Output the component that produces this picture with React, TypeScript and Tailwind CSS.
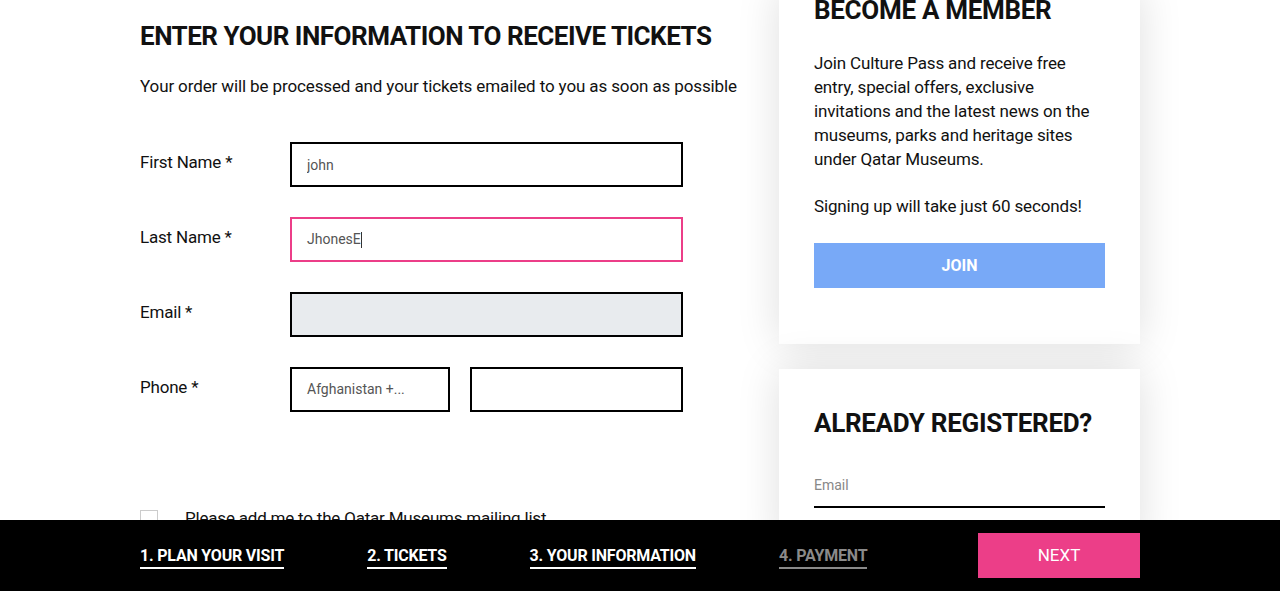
import React from 'react';

const font = { fontFamily: 'Roboto, "Noto Sans", sans-serif' };

interface FieldRowProps {
  label: string;
  children: React.ReactNode;
}

function FieldRow({ label, children }: FieldRowProps) {
  return (
    <div className="flex items-start h-[75px]">
      <label className="w-[150px] pt-[8px] text-[17px] tracking-[-0.2px] text-[#111]">{label}</label>
      <div className="flex gap-[20px] w-[393px]">{children}</div>
    </div>
  );
}

const steps = [
  { label: '1. PLAN YOUR VISIT', active: true },
  { label: '2. TICKETS', active: true },
  { label: '3. YOUR INFORMATION', active: true },
  { label: '4. PAYMENT', active: false },
];

export default function App() {
  return (
    <div className="relative h-[591px] overflow-hidden bg-white" style={font}>
      <div className="w-[1000px] mx-auto flex justify-between">
        {/* form column */}
        <div className="w-[620px] pt-[18px]">
          <h1 className="text-[26px] leading-[36px] font-bold text-[#111] tracking-[-0.5px]">
            ENTER YOUR INFORMATION TO RECEIVE TICKETS
          </h1>
          <p className="mt-[20px] text-[17px] leading-[24px] tracking-[-0.12px] text-[#111] whitespace-nowrap">
            Your order will be processed and your tickets emailed to you as soon as possible
          </p>

          <div className="mt-[44px]">
            <FieldRow label="First Name *">
              <input
                defaultValue="john"
                className="w-full h-[45px] border-2 border-black px-[15px] text-[14px] text-[#555] outline-none"
              />
            </FieldRow>
            <FieldRow label="Last Name *">
              <div className="w-full h-[45px] border-2 border-[#ec3e88] px-[15px] flex items-center text-[14px] text-[#555]">
                JhonesE<span className="inline-block w-px h-[16px] bg-[#333]" />
              </div>
            </FieldRow>
            <FieldRow label="Email *">
              <input className="w-full h-[45px] border-2 border-black bg-[#e8ebee] px-[15px] text-[14px] outline-none" />
            </FieldRow>
            <FieldRow label="Phone *">
              <div className="w-[160px] h-[45px] border-2 border-black px-[15px] flex items-center text-[14px] text-[#555]">
                Afghanistan +...
              </div>
              <input className="flex-1 h-[45px] border-2 border-black px-[15px] text-[14px] outline-none" />
            </FieldRow>
          </div>

          <div className="mt-[64px] flex items-center gap-[27px]">
            <span className="w-[18px] h-[18px] border border-[#ccc] bg-white" />
            <span className="text-[17px] tracking-[-0.2px] text-[#111]">Please add me to the Qatar Museums mailing list</span>
          </div>
        </div>

        {/* member column */}
        <div className="w-[361px] -mt-[12px] flex flex-col gap-[25px]">
          <div className="bg-white shadow-[0_0_40px_rgba(0,0,0,0.13)] px-[35px] pt-[4px] pb-[56px]">
            <h2 className="text-[26px] leading-[36px] font-bold text-[#111] tracking-[-0.3px]">BECOME A MEMBER</h2>
            <p className="mt-[23px] text-[17px] leading-[24px] tracking-[-0.15px] text-[#111]">
              Join Culture Pass and receive free entry, special offers, exclusive invitations and the latest news on the museums, parks and heritage sites under Qatar Museums.
            </p>
            <p className="mt-[23px] text-[17px] leading-[24px] tracking-[-0.15px] text-[#111]">
              Signing up will take just 60 seconds!
            </p>
            <button className="mt-[25px] w-[291px] h-[45px] bg-[#78a9f7] text-white font-bold text-[16px]">
              JOIN
            </button>
          </div>
          <div className="bg-white shadow-[0_0_40px_rgba(0,0,0,0.13)] px-[35px] pt-[36px] pb-[40px]">
            <h2 className="text-[26px] leading-[36px] font-bold text-[#111] tracking-[-0.3px]">ALREADY REGISTERED?</h2>
            <div className="mt-[34px] w-[291px] border-b-2 border-black pb-[10px] text-[14px] text-[#888]">
              Email
            </div>
          </div>
        </div>
      </div>

      {/* step bar */}
      <div className="absolute left-0 right-0 bottom-0 h-[71px] bg-black">
        <div className="w-[1000px] mx-auto h-full flex items-center justify-between">
          <div className="flex gap-[83px] pt-[2px]">
            {steps.map(s => (
              <span
                key={s.label}
                className={
                  'text-[16px] font-bold leading-[22px] tracking-[-0.2px] border-b-2 ' +
                  (s.active ? 'text-white border-white' : 'text-[#8a8a8a] border-[#8a8a8a]')
                }
              >
                {s.label}
              </span>
            ))}
          </div>
          <button className="w-[162px] h-[45px] bg-[#ec3e88] text-white text-[17px]">NEXT</button>
        </div>
      </div>
    </div>
  );
}
